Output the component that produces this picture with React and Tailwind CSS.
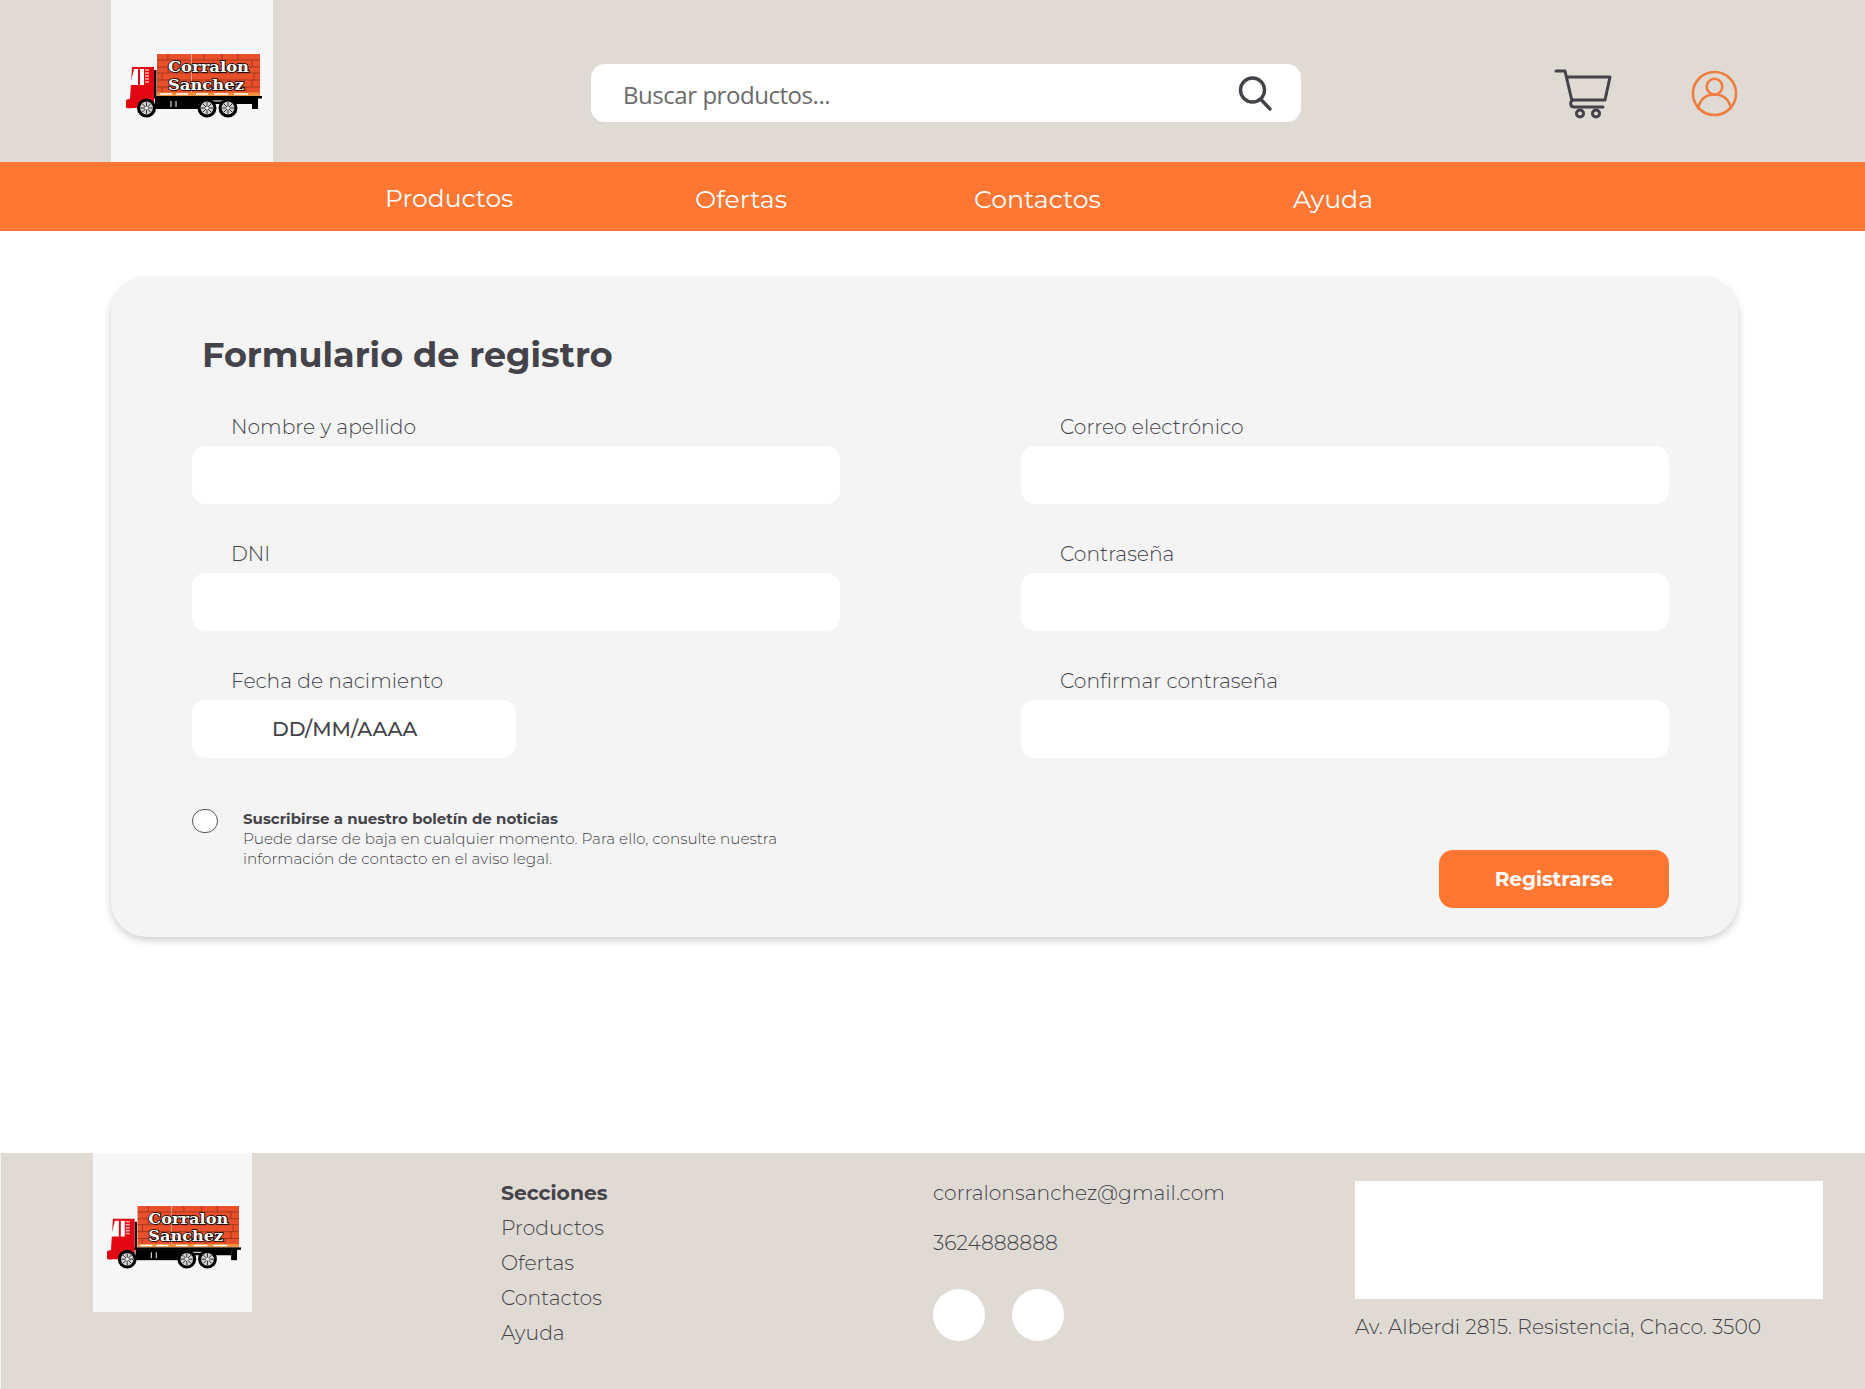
import React from 'react';

const font = { fontFamily: 'Montserrat, Inter, sans-serif' };

const TruckLogo = ({ className }) => (
  <svg viewBox="0 0 136 64" className={className}>
    {/* load of bricks */}
    <rect x="31" y="0" width="103" height="40" fill="#e8502c" />
    <g stroke="#8a2c14" strokeWidth="0.7">
      <path d="M31 6h103M31 13h103M31 19h103M31 26h103M31 33h103" />
      <path d="M42 0v6M54 6v7M42 13v6M36 19v7M36 33v7M50 33v7M84 33v7M100 33v7M120 33v7M78 0v6M96 0v6M112 0v6M126 6v7M128 19v7M126 26v7" />
    </g>
    <path d="M65.5 0v40" stroke="#f3c3b0" strokeWidth="0.7" />
    <rect x="31" y="38.5" width="103" height="3.5" fill="#f0913f" />
    <path d="M34 40h12M50 40h12M70 40h12M88 40h14M108 40h14" stroke="#fff" strokeWidth="1.5" />
    {/* chassis */}
    <rect x="27" y="42" width="109" height="2.5" fill="#000" />
    <rect x="29" y="44" width="43" height="11" fill="#000" />
    <rect x="72" y="44" width="54" height="6" fill="#000" />
    <rect x="126" y="44" width="6" height="11" fill="#000" />
    <path d="M45 47v6M50 47v6M76 47h26" stroke="#fff" strokeWidth="1" />
    <rect x="28" y="16" width="2.5" height="28" fill="#111" />
    {/* cab */}
    <path d="M6 13h22v41H8c-2 0-8 1-8-1v-6c0-1 1-2 3-2h1z" fill="#e30613" />
    <path d="M8 15h4v16H4z" fill="#fff" />
    <path d="M14 15h4v16h-4z" fill="#fff" />
    <path d="M19 16h4M19 19h4M19 22h4M19 25h4M19 28h4" stroke="#f3b4b4" strokeWidth="1.6" />
    {/* wheels */}
    {[20.5, 81, 102].map((cx) => (
      <g key={cx}>
        <circle cx={cx} cy="54" r="9.5" fill="#000" />
        <circle cx={cx} cy="54" r="6.4" fill="#d0d0d0" />
        <path d={`M${cx - 6} 54h12M${cx} 48v12M${cx - 4.2} 49.8l8.4 8.4M${cx + 4.2} 49.8l-8.4 8.4`} stroke="#333" strokeWidth="1" />
        <circle cx={cx} cy="54" r="1.6" fill="#eee" />
      </g>
    ))}
    <g fontFamily="DejaVu Serif, serif" fontWeight="700" fontSize="15" fill="#fff" stroke="#000" strokeWidth="1.6" style={{ paintOrder: 'stroke' }}>
      <text x="42" y="18" textLength="81" lengthAdjust="spacingAndGlyphs">Corralon</text>
      <text x="42" y="35.5" textLength="76" lengthAdjust="spacingAndGlyphs">Sanchez</text>
    </g>
  </svg>
);

const SearchIcon = () => (
  <svg viewBox="0 0 34 36" className="h-[36px] w-[34px]" fill="none" stroke="#434349" strokeWidth="3.4" strokeLinecap="round">
    <circle cx="14.5" cy="15" r="12" />
    <path d="M23 24.5L32 34" />
  </svg>
);

const CartIcon = () => (
  <svg viewBox="0 0 58 50" className="h-[50px] w-[58px]" fill="none" stroke="#434349" strokeWidth="3" strokeLinecap="round" strokeLinejoin="round">
    <path d="M2 2h9l7 30c-2 1-2 6 2 6h29" />
    <path d="M13 8h43l-5 23H18" />
    <circle cx="26" cy="44.5" r="3.5" />
    <circle cx="42" cy="44.5" r="3.5" />
  </svg>
);

const UserIcon = () => (
  <svg viewBox="0 0 48 48" className="h-[47px] w-[47px]" fill="none" stroke="#f07c3e" strokeWidth="2.6">
    <circle cx="24" cy="24" r="22" />
    <circle cx="24" cy="17" r="8" />
    <path d="M7 40c2-10 8-15 17-15s15 5 17 15" />
  </svg>
);

const Field = ({ label }) => (
  <div className="h-[127px]">
    <label className="block h-[44px] pl-[39px] pt-[12px] text-[20.3px] leading-[26px] font-light">{label}</label>
    <input className="h-[58px] w-full rounded-[14px] bg-white outline-none" />
  </div>
);

const App = () => {
  return (
    <div className="min-h-[1389px] bg-white text-[#434349]" style={font}>
      <header className="flex h-[162px] items-start bg-[#dfdad4] pl-[111px]">
        <div className="flex h-[162px] w-[162px] items-center justify-center bg-[#f7f7f7] pl-[4px] pt-[10px]">
          <TruckLogo className="w-[136px] shrink-0" />
        </div>
        <div className="ml-[318px] mt-[64px] flex h-[58px] w-[710px] items-center justify-between rounded-[14px] bg-white pl-[32px] pr-[29px]">
          <span className="mt-[3px] text-[24px] tracking-[-0.45px] text-[#6b6b6b]" style={{ fontFamily: '"Open Sans", sans-serif' }}>Buscar productos...</span>
          <SearchIcon />
        </div>
        <div className="ml-[253px] mt-[69px]"><CartIcon /></div>
        <div className="ml-[79px] mt-[70px]"><UserIcon /></div>
      </header>

      <nav className="flex h-[69px] items-center bg-[#ff7733] pl-[385px] pt-[6px] text-[25.2px] text-white">
        <span className="mb-[2px] w-[310px] text-[25px]">Productos</span>
        <span className="w-[279px]">Ofertas</span>
        <span className="w-[319px]">Contactos</span>
        <span>Ayuda</span>
      </nav>

      <main className="h-[922px] pl-[111px] pr-[127px] pt-[47px]">
        <section className="h-[659px] rounded-[36px] bg-[#f4f4f4] pl-[81px] pr-[69px] shadow-[0_3px_8px_rgba(0,0,0,0.2)]">
          <h1 className="pl-[10px] pt-[55px] text-[35px] leading-[44px] font-bold">Formulario de registro</h1>
          <div className="mt-[25px] grid grid-cols-[648px_648px] gap-x-[181px]">
            <Field label="Nombre y apellido" />
            <Field label="Correo electrónico" />
            <Field label="DNI" />
            <Field label="Contraseña" />
            <div className="h-[127px]">
              <label className="block h-[44px] pl-[39px] pt-[12px] text-[20.3px] leading-[26px] font-light">Fecha de nacimiento</label>
              <div className="flex h-[58px] w-[324px] items-center rounded-[14px] bg-white pl-[80px] text-[20.3px] font-medium">DD/MM/AAAA</div>
            </div>
            <Field label="Confirmar contraseña" />
          </div>
          <div className="mt-[-2px] flex items-start justify-between">
            <div className="flex items-start pt-[27px]">
              <span className="mt-[1px] h-[24px] w-[26px] rounded-full border border-[#555] bg-white" />
              <p className="ml-[25px] mt-[1px] w-[560px] text-[15.2px] leading-[20px] font-light">
                <strong className="text-[15px] font-bold">Suscribirse a nuestro boletín de noticias</strong>
                <br />
                Puede darse de baja en cualquier momento. Para ello, consulte nuestra información de contacto en el aviso legal.
              </p>
            </div>
            <button className="mt-[69px] h-[58px] w-[230px] rounded-[14px] bg-[#ff7733] text-[20px] font-bold text-white">Registrarse</button>
          </div>
        </section>
      </main>

      <footer className="flex h-[236px] items-start border-l border-l-[#f4f4f4] bg-[#dfdad4] pl-[92px]">
        <div className="flex h-[159px] w-[159px] items-center justify-center bg-[#f7f7f7] pl-[3px] pt-[10px]">
          <TruckLogo className="w-[134px] shrink-0" />
        </div>
        <ul className="ml-[249px] w-[432px] pt-[22px] text-[20.3px] leading-[35px] font-light">
          <li className="font-bold">Secciones</li>
          <li>Productos</li>
          <li>Ofertas</li>
          <li>Contactos</li>
          <li>Ayuda</li>
        </ul>
        <div className="w-[422px] pt-[22px] text-[20.3px] leading-[35px] font-light">
          <p>corralonsanchez@gmail.com</p>
          <p className="mt-[15px]">3624888888</p>
          <div className="mt-[29px] flex gap-[27px]">
            <span className="h-[52px] w-[52px] rounded-full bg-white" />
            <span className="h-[52px] w-[52px] rounded-full bg-white" />
          </div>
        </div>
        <div className="pt-[28px]">
          <div className="h-[118px] w-[468px] bg-white" />
          <p className="mt-[10px] text-[20.3px] leading-[35px] font-light">Av. Alberdi 2815. Resistencia, Chaco. 3500</p>
        </div>
      </footer>
    </div>
  );
};

export default App;
